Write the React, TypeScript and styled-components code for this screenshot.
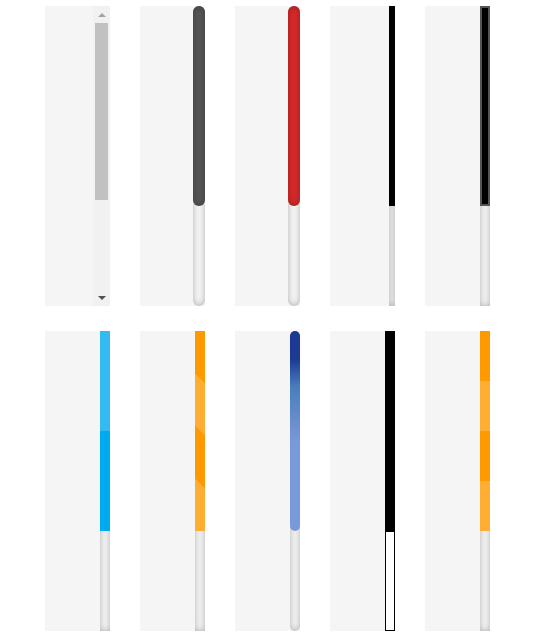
import React from "react";
import styled, { createGlobalStyle } from "styled-components";

const GlobalStyle = createGlobalStyle`
  html, body {
    margin: 0;
    padding: 0;
    background: #fff;
  }
  body {
    font-family: "Liberation Sans", Arial, sans-serif;
  }
`;

const Wrapper = styled.div`
  display: grid;
  grid-template-columns: repeat(5, 65px);
  column-gap: 30px;
  row-gap: 25px;
  padding: 6px 0 0 45px;
`;

const Panel = styled.div`
  width: 65px;
  height: 300px;
  background: #f5f5f5;
  display: flex;
  justify-content: flex-end;
`;

// classic (unstyled) scrollbar
const ClassicBar = styled.div`
  width: 17px;
  height: 100%;
  background: #f1f1f1;
  display: flex;
  flex-direction: column;
`;

const ArrowButton = styled.div<{ $dir: "up" | "down"; $dim?: boolean }>`
  height: 17px;
  flex-shrink: 0;
  display: flex;
  align-items: center;
  justify-content: center;
  &::after {
    content: "";
    width: 0;
    height: 0;
    border-left: 4px solid transparent;
    border-right: 4px solid transparent;
    ${(p) =>
      p.$dir === "up"
        ? `border-bottom: 4px solid ${p.$dim ? "#a3a3a3" : "#505050"};`
        : `border-top: 4px solid ${p.$dim ? "#a3a3a3" : "#505050"};`}
  }
`;

const ClassicTrack = styled.div`
  flex: 1;
  padding: 0 2px;
`;

const ClassicThumb = styled.div`
  height: 177px;
  background: #c1c1c1;
`;

// styled scrollbars
const Track = styled.div<{ $width: number; $round?: boolean; $outlined?: boolean }>`
  width: ${(p) => p.$width}px;
  height: 100%;
  box-sizing: border-box;
  flex-shrink: 0;
  background: ${(p) => (p.$outlined ? "#fff" : "#f5f5f5")};
  border-radius: ${(p) => (p.$round ? "10px" : "0")};
  border: ${(p) => (p.$outlined ? "1px solid #000" : "none")};
  box-shadow: ${(p) => (p.$outlined ? "none" : "inset 0 0 6px rgba(0, 0, 0, 0.3)")};
`;

const Thumb = styled.div`
  height: 200px;
  box-sizing: border-box;
`;

const RoundThumb = styled(Thumb)<{ $color: string }>`
  border-radius: 10px;
  background-color: ${(p) => p.$color};
  box-shadow: inset 0 0 6px rgba(0, 0, 0, 0.3);
`;

const BlackThumb = styled(Thumb)`
  background-color: #000;
`;

const FramedThumb = styled(Thumb)`
  background-color: #000;
  border: 2px solid #555555;
`;

const HalfThumb = styled(Thumb)`
  background-color: #00aaee;
  background-image: linear-gradient(to bottom, rgba(255, 255, 255, 0.2) 50%, transparent 50%);
`;

const StripeThumb = styled(Thumb)<{ $angle: string }>`
  background-color: #ff9900;
  background-image: linear-gradient(
    ${(p) => p.$angle},
    rgba(255, 255, 255, 0.2) 25%,
    transparent 25%,
    transparent 50%,
    rgba(255, 255, 255, 0.2) 50%,
    rgba(255, 255, 255, 0.2) 75%,
    transparent 75%,
    transparent
  );
`;

const BlueThumb = styled(Thumb)`
  border-radius: 10px;
  background-image: linear-gradient(
    to top,
    rgb(122, 153, 217) 44%,
    rgb(73, 125, 189) 72%,
    rgb(28, 58, 148) 86%
  );
`;

function App() {
  return (
    <>
      <GlobalStyle />
      <Wrapper>
        <Panel>
          <ClassicBar>
            <ArrowButton $dir="up" $dim />
            <ClassicTrack>
              <ClassicThumb />
            </ClassicTrack>
            <ArrowButton $dir="down" />
          </ClassicBar>
        </Panel>
        <Panel>
          <Track $width={12} $round>
            <RoundThumb $color="#555" />
          </Track>
        </Panel>
        <Panel>
          <Track $width={12} $round>
            <RoundThumb $color="#d62929" />
          </Track>
        </Panel>
        <Panel>
          <Track $width={6}>
            <BlackThumb />
          </Track>
        </Panel>
        <Panel>
          <Track $width={10}>
            <FramedThumb />
          </Track>
        </Panel>

        <Panel>
          <Track $width={10}>
            <HalfThumb />
          </Track>
        </Panel>
        <Panel>
          <Track $width={10}>
            <StripeThumb $angle="45deg" />
          </Track>
        </Panel>
        <Panel>
          <Track $width={10} $round>
            <BlueThumb />
          </Track>
        </Panel>
        <Panel>
          <Track $width={10} $outlined>
            <BlackThumb />
          </Track>
        </Panel>
        <Panel>
          <Track $width={10}>
            <StripeThumb $angle="to top" />
          </Track>
        </Panel>
      </Wrapper>
    </>
  );
}

export default App;
